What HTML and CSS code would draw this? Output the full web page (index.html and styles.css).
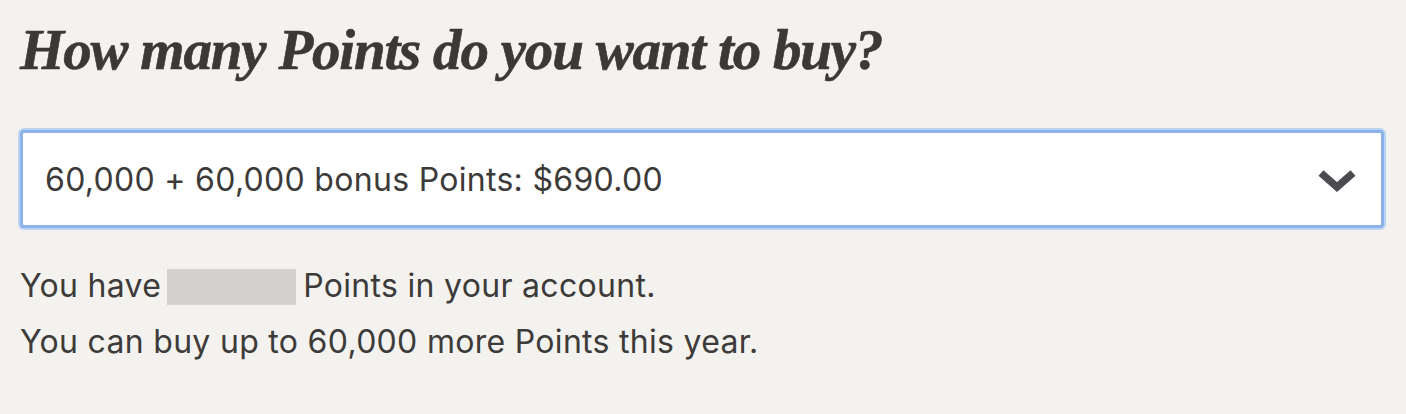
FILE: index.html
```html
<!DOCTYPE html>
<html>
<head>
<meta charset="utf-8">
<link rel="stylesheet" href="styles.css">
</head>
<body>
<main class="page">
  <h1 class="title">How many Points do you want to buy?</h1>
  <div class="select">
    <span class="select-value">60,000 + 60,000 bonus Points: $690.00</span>
    <svg class="chevron" width="40" height="28" viewBox="0 0 40 28"><path d="M4 8 L20 22 L36 8" fill="none" stroke="#4b4b50" stroke-width="7.5"/></svg>
  </div>
  <p class="info">You have<span class="redacted"></span>Points in your account.</p>
  <p class="info">You can buy up to 60,000 more Points this year.</p>
</main>
</body>
</html>
```
FILE: styles.css
```css
html, body { margin: 0; padding: 0; }
body { background: #f3f2ef; color: #3d3b39; }
.page { padding: 18px 20px 0 20px; display: flex; flex-direction: column; }
.title {
  font-family: "Liberation Serif", serif;
  font-style: italic; font-weight: bold;
  font-size: 57px; line-height: 64px;
  margin: 0; letter-spacing: -1.2px; color: #3b3937;
  -webkit-text-stroke: 0.6px #3b3937;
}
.select {
  margin-top: 48px;
  width: 1364px; height: 98px; box-sizing: border-box;
  background: #fff;
  border: 3px solid #8bb3ea;
  box-shadow: 0 0 0 2px #bcd3f3;
  border-radius: 4px;
  display: flex; align-items: center; justify-content: space-between;
  padding: 0 24px 0 22px;
}
.select-value { font-family: "Inter", "Liberation Sans", sans-serif; font-size: 32px; color: #3d3b39; letter-spacing: 0.3px; }
.info { font-family: "Inter", "Liberation Sans", sans-serif; font-size: 32px; margin: 0; line-height: 56px; letter-spacing: 0.3px; }
.info:first-of-type { margin-top: 30px; }
.redacted { display: inline-block; width: 129px; height: 36px; background: #d3d2ce; vertical-align: -8px; margin: 0 7px 0 6px; }
```
